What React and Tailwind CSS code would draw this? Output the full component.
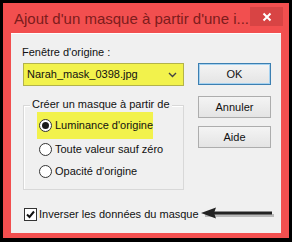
import React from 'react';

const font = { fontFamily: '"Liberation Sans", Arial, sans-serif' };

function Radio({ checked }) {
  return (
    <span className="w-[13px] h-[13px] rounded-full border border-[#333] bg-white flex items-center justify-center shrink-0">
      {checked && <span className="w-[7px] h-[7px] rounded-full bg-[#1a1a1a]" />}
    </span>
  );
}

function Btn({ children, primary, className }) {
  return (
    <div
      className={
        'w-[73px] h-[22px] flex items-center justify-center text-[11px] text-[#111] bg-gradient-to-b from-[#f4f4f4] to-[#e4e4e4] ' +
        (primary ? 'border border-[#3c7fb1] shadow-[inset_0_0_0_1px_#a6d2f0] ' : 'border border-[#adadad] ') +
        (className || '')
      }
    >
      {children}
    </div>
  );
}

export default function App() {
  return (
    <div className="w-[292px] h-[242px] bg-black pt-[3px] pl-[3px] pr-[3px] pb-[4px]" style={font}>
      <div className="w-full h-full bg-[#f24f4f] flex flex-col">
        {/* title bar */}
        <div className="h-[30px] flex items-start shrink-0">
          <span className="ml-[11px] mt-[7px] text-[15px] leading-[18px] text-[#7d1c1c] whitespace-nowrap">
            Ajout d'un masque à partir d'une i...
          </span>
          <div className="ml-auto mr-[6px] mt-[4px] w-[33px] h-[19px] bg-[#d84444] flex items-center justify-center">
            <svg width="10" height="10" viewBox="0 0 10 10">
              <path d="M1.5 1.5 L8.5 8.5 M8.5 1.5 L1.5 8.5" stroke="#fff" strokeWidth="2" />
            </svg>
          </div>
        </div>

        {/* client */}
        <div className="mx-[8px] mb-[5px] flex-1 bg-[#f0f0f0] border-t border-white flex flex-col">
          <div className="flex">
            {/* left column */}
            <div className="ml-[12px] w-[161px] flex flex-col">
              <div className="mt-[11px] ml-[-1px] text-[11px] leading-[15px] text-[#111] whitespace-nowrap">Fenêtre d'origine :</div>
              <div className="mt-[3px] h-[23px] bg-[#f2f24c] border border-[#b3b34a] flex items-center pl-[3px] pr-[6px]">
                <span className="text-[11px] text-[#111] whitespace-nowrap">Narah_mask_0398.jpg</span>
                <svg className="ml-auto" width="9" height="6" viewBox="0 0 9 6">
                  <path d="M1 1 L4.5 4.5 L8 1" stroke="#444" strokeWidth="1.4" fill="none" />
                </svg>
              </div>
              <div className="relative mt-[19px] h-[85px] border border-[#d8d8d8] shadow-[inset_1px_1px_0_#fff]">
                <span className="absolute -top-[9px] left-[6px] px-[2px] bg-[#f0f0f0] text-[11px] leading-[15px] text-[#111] whitespace-nowrap">
                  Créer un masque à partir de
                </span>
                <div className="flex flex-col mt-[5px] ml-[13px]">
                  <div className="w-[116px] h-[28px] bg-[#f2f24c] flex items-center gap-[3px] pl-[2px]">
                    <Radio checked />
                    <span className="text-[11px] text-[#111] whitespace-nowrap">Luminance d'origine</span>
                  </div>
                  <div className="h-[19px] flex items-center gap-[3px] pl-[2px] mt-[1px]">
                    <Radio />
                    <span className="text-[11px] text-[#111] whitespace-nowrap">Toute valeur sauf zéro</span>
                  </div>
                  <div className="h-[19px] flex items-center gap-[3px] pl-[2px] mt-[3px]">
                    <Radio />
                    <span className="text-[11px] text-[#111] whitespace-nowrap">Opacité d'origine</span>
                  </div>
                </div>
              </div>
            </div>

            {/* right column */}
            <div className="ml-[14px] flex flex-col">
              <Btn primary className="mt-[29px]">OK</Btn>
              <Btn className="mt-[11px]">Annuler</Btn>
              <Btn className="mt-[8px]">Aide</Btn>
            </div>
          </div>

          {/* checkbox row */}
          <div className="flex items-center ml-[13px] mt-[16px]">
            <span className="w-[13px] h-[13px] border border-[#333] bg-white flex items-center justify-center shrink-0">
              <svg width="11" height="11" viewBox="0 0 11 11">
                <path d="M2 5.5 L4.5 8 L9 2.5" stroke="#111" strokeWidth="2" fill="none" />
              </svg>
            </span>
            <span className="ml-[2px] text-[11px] text-[#111] whitespace-nowrap">Inverser les données du masque</span>
            <svg className="ml-[2px]" width="74" height="16" viewBox="0 0 74 16">
              <path d="M4 9.5 L73 9.5" stroke="#777" strokeWidth="3" opacity="0.45" />
              <path d="M10 7 L71 7" stroke="#222" strokeWidth="3" />
              <path d="M0 7 L15 1.5 L13 7 L15 12.5 Z" fill="#222" />
            </svg>
          </div>
        </div>
      </div>
    </div>
  );
}
